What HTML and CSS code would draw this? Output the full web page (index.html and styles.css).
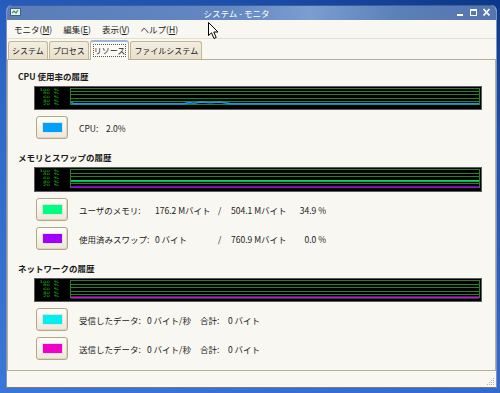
FILE: index.html
```html
<!DOCTYPE html>
<html lang="ja">
<head>
    <meta charset="UTF-8">
    <title>システム - モニタ</title>
    <link rel="stylesheet" href="styles.css">
</head>
<body>
    <div class="window">
        <div class="titlebar">
            <svg class="app-icon" width="11" height="10" viewBox="0 0 11 10">
                <rect x="0.5" y="0.5" width="10" height="7" fill="#e6eef6" stroke="#40608c"/>
                <polyline points="2,5 4,3 6,5 8,2" fill="none" stroke="#3a9a3a" stroke-width="1.2"/>
                <rect x="3" y="8" width="5" height="2" fill="#6a7f9c"/>
            </svg>
            <span class="title">システム - モニタ</span>
            <svg class="controls" width="36" height="10" viewBox="0 0 36 10">
                <rect x="1" y="6" width="6" height="2" fill="#fff"/>
                <rect x="14.5" y="1.5" width="6" height="6" fill="none" stroke="#fff"/>
                <rect x="14" y="1" width="7" height="2" fill="#fff"/>
                <path d="M27.5 1 L33.5 7.5 M33.5 1 L27.5 7.5" stroke="#fff" stroke-width="1.8"/>
            </svg>
        </div>

        <div class="menubar">
            <span class="menu">モニタ(<u>M</u>)</span>
            <span class="menu">編集(<u>E</u>)</span>
            <span class="menu">表示(<u>V</u>)</span>
            <span class="menu">ヘルプ(<u>H</u>)</span>
        </div>

        <div class="tabs">
            <div class="tab">システム</div>
            <div class="tab">プロセス</div>
            <div class="tab active"><span class="focus">リソース</span></div>
            <div class="tab">ファイルシステム</div>
        </div>

        <div class="panel">
            <section class="group">
                <h3>CPU 使用率の履歴</h3>
                <svg class="graph" width="448" height="24" viewBox="0 0 448 24">
                    <rect x="0.5" y="0.5" width="447" height="23" fill="#000" stroke="#5c5c5c"/>
                    <g class="axis" transform="scale(1 0.6)">
                        <text x="16" y="8">100</text><text x="16" y="14">80</text><text x="16" y="20">60</text>
                        <text x="16" y="26">40</text><text x="16" y="32">20</text>
                        <text x="25" y="8">%</text><text x="25" y="14">%</text><text x="25" y="20">%</text>
                        <text x="25" y="26">%</text><text x="25" y="32">%</text>
                    </g>
                    <g class="grid">
                        <line x1="36" y1="2.5" x2="446" y2="2.5"/><line x1="36" y1="5.5" x2="446" y2="5.5"/>
                        <line x1="36" y1="8.5" x2="446" y2="8.5"/><line x1="36" y1="12.5" x2="446" y2="12.5"/>
                        <line x1="36" y1="15.5" x2="446" y2="15.5"/><line x1="36" y1="18.5" x2="446" y2="18.5"/>
                        <line x1="36.5" y1="2.5" x2="36.5" y2="18.5"/><line x1="445.5" y1="2.5" x2="445.5" y2="18.5"/>
                    </g>
                    <polyline class="line cpu" points="37,16.5 40,17.8 150,17.8 155,16.6 160,17.2 167,15.9 176,16.6 186,16 196,17.6 445,17.8"/>
                </svg>
                <div class="legend-row">
                    <button class="swatch-btn"><span class="swatch cpu"></span></button>
                    <span class="lbl-cpu">CPU:</span>
                    <span class="num">2.0%</span>
                </div>
            </section>

            <section class="group">
                <h3>メモリとスワップの履歴</h3>
                <svg class="graph" width="448" height="25" viewBox="0 0 448 25">
                    <rect x="0.5" y="0.5" width="447" height="24" fill="#000" stroke="#5c5c5c"/>
                    <g class="axis" transform="scale(1 0.6)">
                        <text x="16" y="8">100</text><text x="16" y="14">80</text><text x="16" y="20">60</text>
                        <text x="16" y="26">40</text><text x="16" y="32">20</text>
                        <text x="25" y="8">%</text><text x="25" y="14">%</text><text x="25" y="20">%</text>
                        <text x="25" y="26">%</text><text x="25" y="32">%</text>
                    </g>
                    <g class="grid">
                        <line x1="36" y1="2.5" x2="446" y2="2.5"/><line x1="36" y1="6.5" x2="446" y2="6.5"/>
                        <line x1="36" y1="9.5" x2="446" y2="9.5"/><line x1="36" y1="13.5" x2="446" y2="13.5"/>
                        <line x1="36" y1="16.5" x2="446" y2="16.5"/><line x1="36" y1="20.5" x2="446" y2="20.5"/>
                        <line x1="36.5" y1="2.5" x2="36.5" y2="20.5"/><line x1="445.5" y1="2.5" x2="445.5" y2="20.5"/>
                    </g>
                    <polyline class="line mem" points="37,14 445,14"/>
                    <polyline class="line swap" points="37,20 445,20"/>
                </svg>
                <div class="legend-row">
                    <button class="swatch-btn"><span class="swatch mem"></span></button>
                    <span class="lbl">ユーザのメモリ:</span>
                    <span class="used">176.2 Mバイト</span>
                    <span class="slash">/</span>
                    <span class="total">504.1 Mバイト</span>
                    <span class="pct">34.9 %</span>
                </div>
                <div class="legend-row">
                    <button class="swatch-btn"><span class="swatch swap"></span></button>
                    <span class="lbl">使用済みスワップ:</span>
                    <span class="used">0 バイト</span>
                    <span class="slash">/</span>
                    <span class="total">760.9 Mバイト</span>
                    <span class="pct">0.0 %</span>
                </div>
            </section>

            <section class="group">
                <h3>ネットワークの履歴</h3>
                <svg class="graph" width="448" height="24" viewBox="0 0 448 24">
                    <rect x="0.5" y="0.5" width="447" height="23" fill="#000" stroke="#5c5c5c"/>
                    <g class="axis" transform="scale(1 0.6)">
                        <text x="16" y="8">100</text><text x="16" y="14">80</text><text x="16" y="20">60</text>
                        <text x="16" y="26">40</text><text x="16" y="32">20</text>
                        <text x="25" y="8">%</text><text x="25" y="14">%</text><text x="25" y="20">%</text>
                        <text x="25" y="26">%</text><text x="25" y="32">%</text>
                    </g>
                    <g class="grid">
                        <line x1="36" y1="2.5" x2="446" y2="2.5"/><line x1="36" y1="6.5" x2="446" y2="6.5"/>
                        <line x1="36" y1="9.5" x2="446" y2="9.5"/><line x1="36" y1="13.5" x2="446" y2="13.5"/>
                        <line x1="36" y1="16.5" x2="446" y2="16.5"/>
                        <line x1="36.5" y1="2.5" x2="36.5" y2="19.5"/><line x1="445.5" y1="2.5" x2="445.5" y2="19.5"/>
                    </g>
                    <polyline class="line recv" points="37,19.5 445,19.5"/>
                    <polyline class="line send" points="37,19.5 445,19.5"/>
                </svg>
                <div class="legend-row">
                    <button class="swatch-btn"><span class="swatch recv"></span></button>
                    <span class="lbl-net">受信したデータ:</span>
                    <span class="rate">0 バイト/秒</span>
                    <span class="sum">合計:</span>
                    <span>0 バイト</span>
                </div>
                <div class="legend-row">
                    <button class="swatch-btn"><span class="swatch send"></span></button>
                    <span class="lbl-net">送信したデータ:</span>
                    <span class="rate">0 バイト/秒</span>
                    <span class="sum">合計:</span>
                    <span>0 バイト</span>
                </div>
            </section>
        </div>

        <div class="statusbar">
            <svg class="grip" width="9" height="9" viewBox="0 0 9 9">
                <g fill="#b8b29c">
                    <rect x="7" y="1" width="1" height="1"/>
                    <rect x="5" y="3" width="1" height="1"/><rect x="7" y="3" width="1" height="1"/>
                    <rect x="3" y="5" width="1" height="1"/><rect x="5" y="5" width="1" height="1"/><rect x="7" y="5" width="1" height="1"/>
                    <rect x="1" y="7" width="1" height="1"/><rect x="3" y="7" width="1" height="1"/><rect x="5" y="7" width="1" height="1"/><rect x="7" y="7" width="1" height="1"/>
                </g>
            </svg>
        </div>
    </div>

    <!-- mouse pointer over the menu bar -->
    <svg class="cursor" width="12" height="18" viewBox="0 0 12 18">
        <path d="M0.5 0.5 L0.5 13.5 L3.5 10.8 L6 16.5 L8.2 15.5 L5.8 10 L10 10 Z" fill="#fff" stroke="#000" stroke-linejoin="round"/>
    </svg>
</body>
</html>
```

FILE: styles.css
```css
* {
    box-sizing: border-box;
}

body {
    margin: 0;
    width: 500px;
    height: 393px;
    overflow: hidden;
    position: relative;
    background: linear-gradient(205deg, #0c3788 0%, #1e51ae 22%, #3068cc 55%, #3a76d8 100%);
    font-family: "Noto Sans CJK JP", "DejaVu Sans", sans-serif;
    font-size: 8.5px;
    color: #222;
}

.window {
    margin: 5px 0 0 6px;
    width: 491px;
    height: 383px;
    background: #f8f7f1;
    border: 1px solid #8093bb;
    border-top: none;
    border-bottom-color: #7c7a70;
    border-radius: 6px 6px 0 0;
    display: flex;
    flex-direction: column;
    overflow: hidden;
}

.titlebar {
    height: 15px;
    flex-shrink: 0;
    display: flex;
    align-items: center;
    padding: 0 2px 0 3px;
    background: linear-gradient(90deg, #5a7db8 0%, #6287c2 45%, #7b9dd0 62%, #5b7fb9 80%, #5475b0 100%);
    border-top: 1px solid #3f5f98;
    color: #fff;
}

.app-icon {
    display: block;
}

.title {
    flex: 1;
    text-align: center;
    font-size: 8.5px;
    line-height: 14px;
    padding-right: 4px;
}

.controls {
    display: block;
    margin-right: 2px;
}

.menubar {
    height: 19px;
    flex-shrink: 0;
    display: flex;
    align-items: center;
    gap: 11px;
    padding-left: 7px;
    border-bottom: 1px solid #e4dece;
    line-height: 18px;
}

.menu u {
    text-decoration: underline;
    text-underline-offset: 1px;
}

.tabs {
    height: 20px;
    flex-shrink: 0;
    display: flex;
    align-items: flex-end;
    padding-left: 1px;
    position: relative;
    z-index: 1;
}

.tab {
    height: 18px;
    padding: 0 3px;
    font-size: 8px;
    line-height: 17px;
    background: linear-gradient(#f3eee1, #e8e0cb);
    border: 1px solid #c2b692;
    border-bottom: none;
    border-radius: 3px 3px 0 0;
    margin-right: 1px;
}

.tab.active {
    height: 20px;
    margin-bottom: -1px;
    padding: 1px 3px 0;
    background: #fbfaf4;
    border-color: #b7ae94;
    border-top: 2px solid #9fb4d8;
    line-height: 15px;
}

.focus {
    outline: 1px dotted #555;
    outline-offset: 0;
}

.panel {
    flex: 1;
    border: 1px solid #b6af97;
    padding: 10px 0 0 10px;
}

.group + .group {
    margin-top: 12px;
}

.group h3 {
    margin: 0;
    height: 12px;
    line-height: 12px;
    font-size: 8.5px;
    font-weight: bold;
    color: #1c1c1c;
}

.graph {
    display: block;
    margin: 4px 0 0 16px;
}

.axis text {
    font-family: "DejaVu Sans", sans-serif;
    font-size: 5.5px;
    fill: #24c424;
    text-anchor: end;
}

.grid line {
    stroke: #2a7f2a;
    stroke-width: 1;
    shape-rendering: crispEdges;
}

.line {
    fill: none;
    stroke-width: 1.4;
}

.line.cpu { stroke: #0a9cf0; stroke-width: 1.6; }
.line.mem { stroke: #00f07a; }
.line.swap { stroke: #a400f0; stroke-width: 1.6; }
.line.recv { stroke: #00f0f0; }
.line.send { stroke: #f000c8; }

.legend-row {
    display: flex;
    align-items: center;
    height: 23px;
    margin: 6px 0 0 18px;
    white-space: nowrap;
}

.swatch-btn {
    width: 32px;
    height: 23px;
    padding: 0;
    margin-right: 11px;
    display: flex;
    align-items: center;
    justify-content: center;
    background: linear-gradient(#fefdf9, #ece8da);
    border: 1px solid #b3a785;
    border-radius: 3px;
    box-shadow: inset -1px -1px 0 #ddd6c2;
}

.swatch {
    display: block;
    width: 21px;
    height: 11px;
    border: 1px solid #e4e2da;
}

.swatch.cpu { background: #00a0ff; }
.swatch.mem { background: #00ff80; }
.swatch.swap { background: #a000ff; }
.swatch.recv { background: #00f0f0; }
.swatch.send { background: #f000c8; }

.lbl-cpu { width: 27px; }
.lbl { width: 76px; }
.lbl-net { width: 68px; }
.used { width: 63px; }
.slash { width: 13px; }
.total { width: 60px; }
.pct { width: 35px; text-align: right; }
.rate { width: 53px; }
.sum { width: 28px; }

.statusbar {
    height: 16px;
    flex-shrink: 0;
    display: flex;
    justify-content: flex-end;
    align-items: flex-end;
    padding: 0 1px 1px 0;
}

.grip {
    display: block;
}

.cursor {
    position: absolute;
    left: 208px;
    top: 22px;
}
```
